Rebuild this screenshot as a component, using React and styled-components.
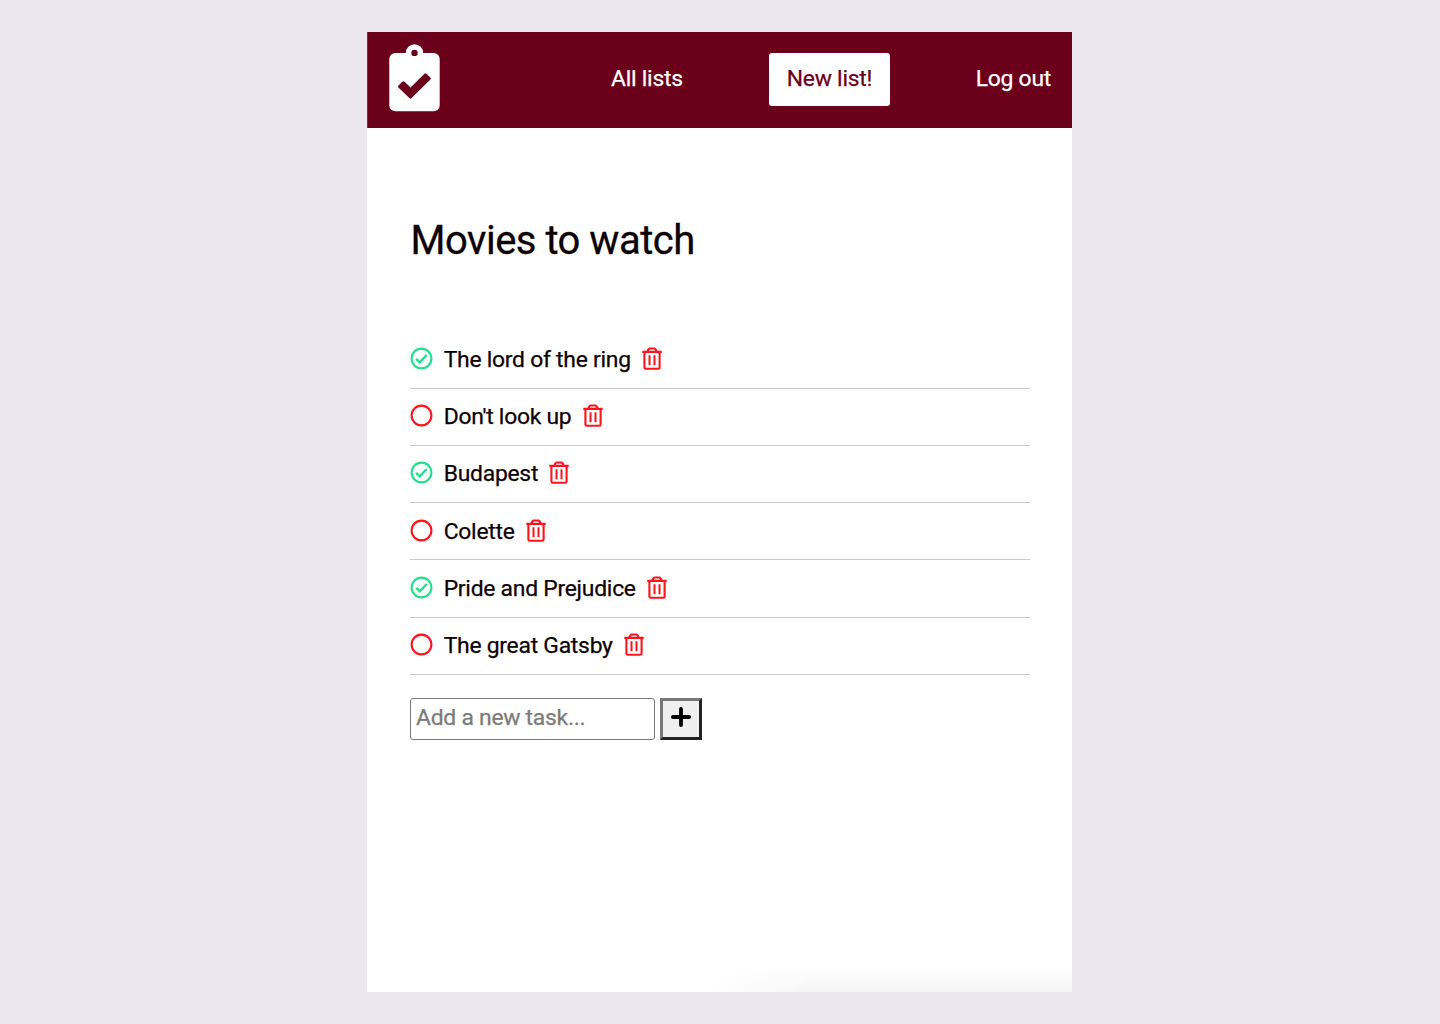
import React from "react";
import styled, { createGlobalStyle } from "styled-components";

const GlobalStyle = createGlobalStyle`
  * { box-sizing: border-box; }
  body {
    margin: 0;
    background: #ece7ee;
    font-family: Roboto, sans-serif;
    letter-spacing: -0.26px;
    -webkit-text-stroke: 0.25px;
    color: #0d0003;
  }
`;

const Page = styled.div`
  height: 1024px;
  padding: 32px 0 32px 367px;
`;

const Panel = styled.div`
  width: 705px;
  height: 960px;
  display: flex;
  flex-direction: column;
  background: #fff;
`;

const Header = styled.header`
  height: 96px;
  flex: none;
  display: flex;
  align-items: flex-start;
  padding: 12px 21px 0 22px;
  background: #6a001a;
  box-shadow: inset 1px 0 #763044;
`;

const Logo = styled.svg`
  flex: none;
  width: 51px;
  height: 68px;
  margin-right: auto;
`;

const NavLink = styled.a`
  color: #fff;
  font-size: 22.9px;
  line-height: 28px;
  margin-top: 20.5px;
  white-space: nowrap;
`;

const NewButton = styled.a`
  flex: none;
  width: 121.5px;
  height: 53px;
  margin: 8.5px 85.5px 0 86px;
  display: flex;
  justify-content: center;
  background: #fff;
  border-radius: 3px;
  color: #6a001a;
  font-size: 22.9px;
  line-height: 52px;
`;

const Main = styled.main`
  flex: 1;
  padding: 87px 42px 0 43px;
  background:
    linear-gradient(100deg, #fff 5%, transparent 32%) no-repeat 100% 100% / 375px 27px,
    linear-gradient(#fff, #f5f5f5) no-repeat 100% 100% / 375px 27px;
`;

const Title = styled.h1`
  margin: 0 0 64.6px;
  padding-left: 0.6px;
  font-size: 40px;
  font-weight: 400;
  line-height: 52px;
  letter-spacing: -0.5px;
  -webkit-text-stroke: 0.3px;
`;

const List = styled.ul`
  list-style: none;
  margin: 0;
  padding: 0 0 22.9px;
`;

const Row = styled.li`
  height: 57.2px;
  display: flex;
  padding-top: 10.4px;
  border-bottom: 1px solid #cacaca;
`;

const TaskName = styled.span`
  font-size: 22.9px;
  line-height: 35px;
  margin: 0 11.3px 0 10.7px;
  white-space: nowrap;
`;

const StatusSvg = styled.svg`
  width: 23px;
  height: 23px;
  margin-top: 5px;
  color: ${(p) => (p.$done ? "#24de8b" : "#ff141b")};
`;

const TrashSvg = styled.svg`
  width: 20px;
  height: 24px;
  margin-top: 5px;
  color: #ff141b;
`;

const AddForm = styled.form`
  display: flex;
  gap: 5px;
`;

const TaskInput = styled.input`
  width: 245px;
  height: 42px;
  padding: 0 5px 2px;
  border: 1.4px solid #777;
  border-radius: 3px;
  font-family: inherit;
  font-size: 22.9px;
  letter-spacing: -0.26px;
  background: #fff;
  &::placeholder { color: #7b7b7b; }
`;

const AddButton = styled.button`
  width: 42px;
  height: 42px;
  padding: 0 0 3px;
  display: flex;
  align-items: center;
  justify-content: center;
  border: 3px solid;
  border-color: #777 #222 #222 #777;
  background: #efefef;
`;

const PlusSvg = styled.svg`
  width: 20px;
  height: 20px;
`;

function Clipboard() {
  return (
    <Logo viewBox="0 0 51 68">
      <rect x="0.3" y="8.9" width="50.4" height="58.4" rx="6" fill="#fff" />
      <circle cx="25.5" cy="8.9" r="8.7" fill="#fff" />
      <circle cx="25.5" cy="8.9" r="3.2" fill="#6a001a" />
      <path
        d="M9.5 41.5 13.7 37.6Q14.7 36.8 15.6 37.7L21.5 43.4 35.5 29.7Q36.5 28.8 37.5 29.7L41.5 33.7Q42.4 34.6 41.4 35.6L22.4 54.3Q21.5 55.2 20.6 54.3L9.4 43.4Q8.5 42.4 9.5 41.5Z"
        fill="#6a001a"
      />
    </Logo>
  );
}

function Status({ done }) {
  return (
    <StatusSvg $done={done} viewBox="0 0 23 23" fill="none" stroke="currentColor" strokeWidth="2.1">
      <circle cx="11.5" cy="11.5" r="9.9" />
      {done && <path d="m6.2 11.9 3.5 3.4 7-7.3" strokeWidth="2.4" />}
    </StatusSvg>
  );
}

function Trash() {
  return (
    <TrashSvg viewBox="0 0 20 24" fill="none" stroke="currentColor" strokeWidth="2.1">
      <path d="M0.3 4.9H19.7M2.4 4.9V20.4Q2.4 21.8 3.8 21.8H16.2Q17.6 21.8 17.6 20.4V4.9M5.2 4.8 6.4 2.4Q7 1.5 7.8 1.5H12.2Q13 1.5 13.6 2.4L14.8 4.8" />
      <path d="M7.5 8.3V18.2M12.5 8.3V18.2" strokeWidth="2" />
    </TrashSvg>
  );
}

const tasks = [
  { name: "The lord of the ring", done: true },
  { name: "Don't look up", done: false },
  { name: "Budapest", done: true },
  { name: "Colette", done: false },
  { name: "Pride and Prejudice", done: true },
  { name: "The great Gatsby", done: false },
];

export default function App() {
  return (
    <Page>
      <GlobalStyle />
      <Panel>
        <Header>
          <Clipboard />
          <NavLink>All lists</NavLink>
          <NewButton>New list!</NewButton>
          <NavLink>Log out</NavLink>
        </Header>
        <Main>
          <Title>Movies to watch</Title>
          <List>
            {tasks.map((t) => (
              <Row key={t.name}>
                <Status done={t.done} />
                <TaskName>{t.name}</TaskName>
                <Trash />
              </Row>
            ))}
          </List>
          <AddForm>
            <TaskInput placeholder="Add a new task..." />
            <AddButton type="button" aria-label="Add task">
              <PlusSvg viewBox="0 0 20 20">
                <path d="M10 1.9V18.1M1.9 10H18.1" stroke="#000" strokeWidth="3.8" strokeLinecap="round" />
              </PlusSvg>
            </AddButton>
          </AddForm>
        </Main>
      </Panel>
    </Page>
  );
}
